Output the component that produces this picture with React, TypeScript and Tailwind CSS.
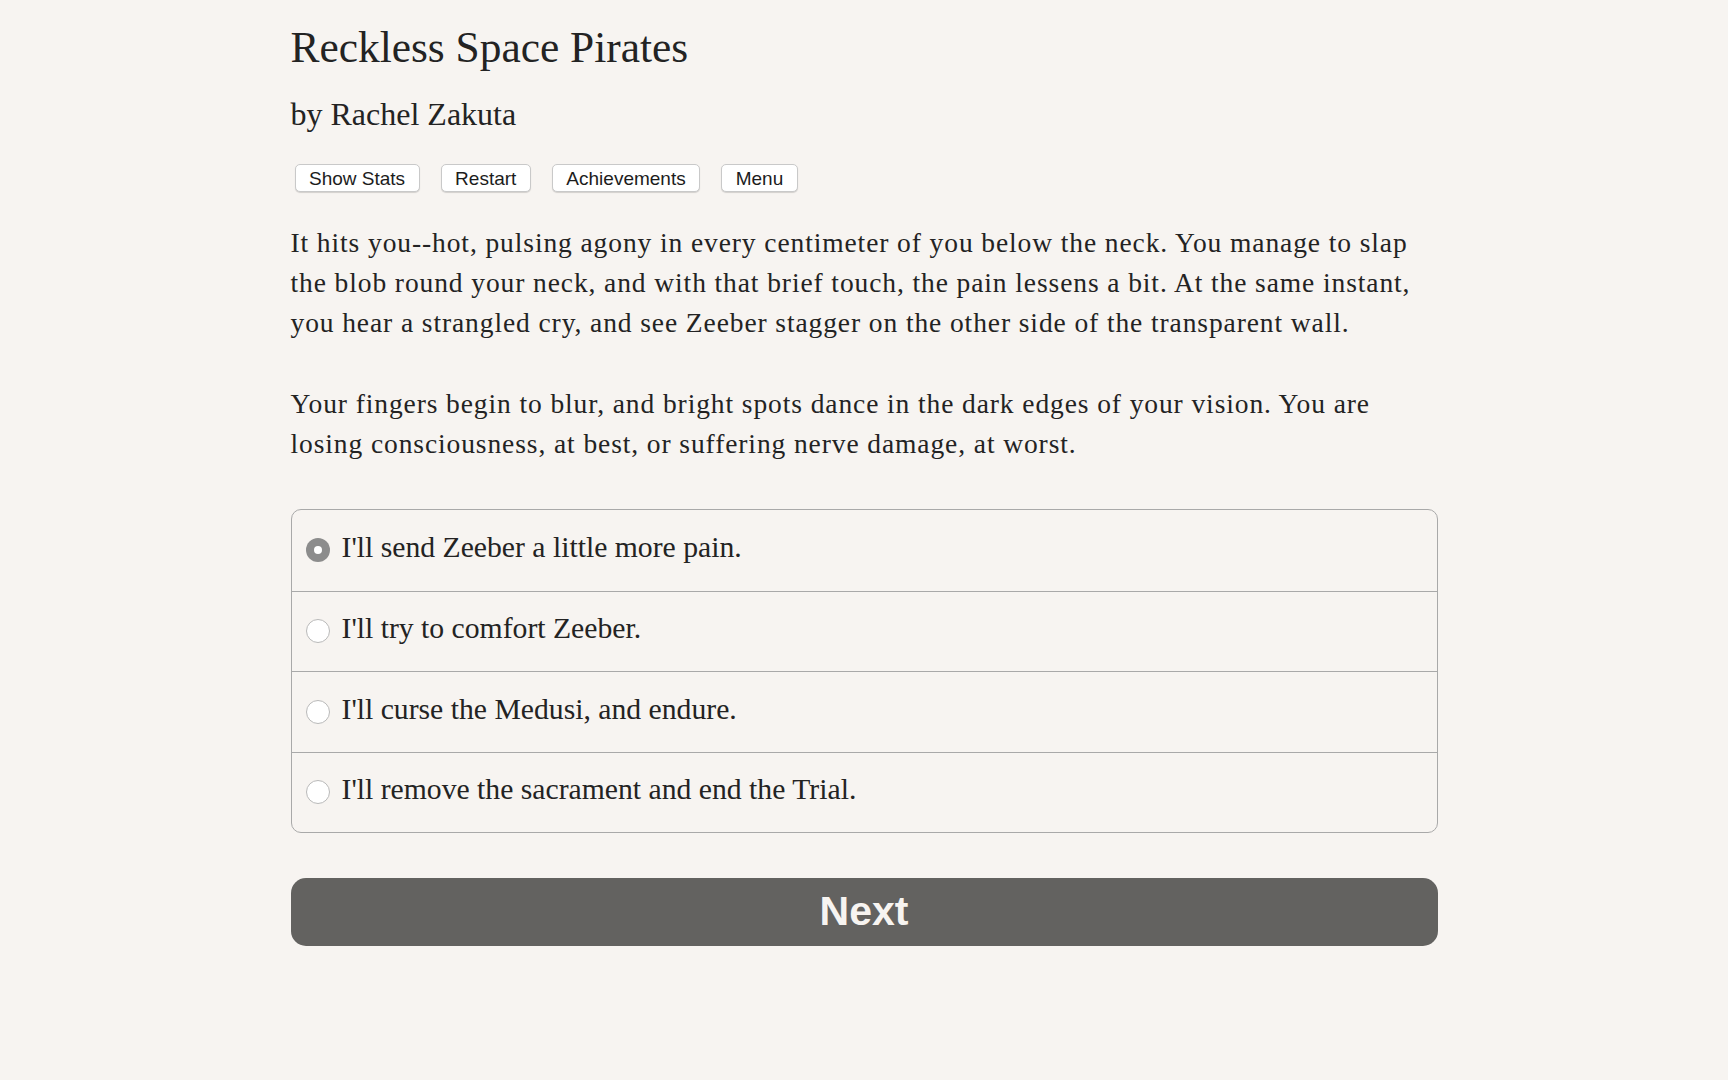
import { useState } from "react";

const choices = [
  "I'll send Zeeber a little more pain.",
  "I'll try to comfort Zeeber.",
  "I'll curse the Medusi, and endure.",
  "I'll remove the sacrament and end the Trial.",
];

const serif = "font-['Liberation_Serif','Times_New_Roman',serif]";
const sans = "font-['Liberation_Sans',Arial,sans-serif]";

function ToolButton({ label }: { label: string }) {
  return (
    <button
      className={`${sans} h-[28px] rounded-[5px] border border-[#c9c9c9] bg-white px-[13.5px] text-[19px] leading-none text-[#1c1c1c] shadow-[0_1px_1px_rgba(0,0,0,0.15)]`}
    >
      {label}
    </button>
  );
}

export default function App() {
  const [picked, setPicked] = useState(0);

  return (
    <div className={`min-h-screen bg-[#f7f4f1] text-[#232323] ${serif}`}>
      <div className="mx-auto w-[1147px] pt-[19px]">
        <h1 className="text-[43.4px] leading-[56px]">Reckless Space Pirates</h1>
        <h2 className="mt-[19px] text-[32px] leading-[40px]">by Rachel Zakuta</h2>

        <div className="mt-[30px] flex gap-[21px] pl-[4px]">
          <ToolButton label="Show Stats" />
          <ToolButton label="Restart" />
          <ToolButton label="Achievements" />
          <ToolButton label="Menu" />
        </div>

        <div className="mt-[31px] text-[27.5px] leading-[40px] tracking-[0.9px]">
          <p>
            It hits you--hot, pulsing agony in every centimeter of you below the neck. You manage to slap
            <br />
            the blob round your neck, and with that brief touch, the pain lessens a bit. At the same instant,
            <br />
            you hear a strangled cry, and see Zeeber stagger on the other side of the transparent wall.
          </p>
          <p className="mt-[41px]">
            Your fingers begin to blur, and bright spots dance in the dark edges of your vision. You are
            <br />
            losing consciousness, at best, or suffering nerve damage, at worst.
          </p>
        </div>

        <div className="mt-[45px] overflow-hidden rounded-[10px] border border-[#a9a9a9]">
          {choices.map((c, i) => (
            <label
              key={c}
              onClick={() => setPicked(i)}
              className={`flex h-[80.5px] cursor-pointer items-center gap-[12px] pl-[14px] ${
                i > 0 ? "border-t border-[#a9a9a9]" : ""
              }`}
            >
              {picked === i ? (
                <span className="flex h-[24px] w-[24px] items-center justify-center rounded-full bg-[#8c8c8c]">
                  <span className="h-[8px] w-[8px] rounded-full bg-white" />
                </span>
              ) : (
                <span className="h-[24px] w-[24px] rounded-full border border-[#b9b9b9] bg-white" />
              )}
              <span className="pb-[4px] text-[29.7px] leading-none">{c}</span>
            </label>
          ))}
        </div>

        <button
          className={`${sans} mt-[45px] flex h-[68px] w-full items-center justify-center rounded-[15px] bg-[#636260] text-[41px] font-bold text-[#f7f4f1]`}
        >
          Next
        </button>
      </div>
    </div>
  );
}
